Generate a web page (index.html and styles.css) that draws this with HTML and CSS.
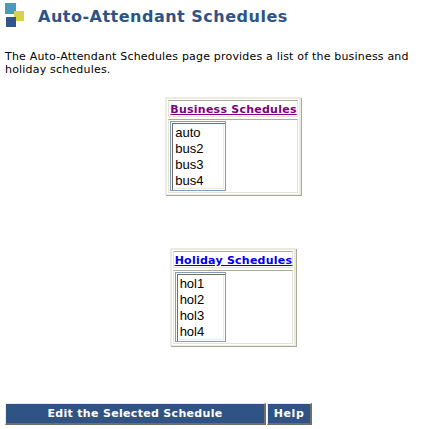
FILE: index.html
```html
<!DOCTYPE html>
<html>
<head>
<meta charset="utf-8">
<title>Auto-Attendant Schedules</title>
<link rel="stylesheet" href="styles.css">
</head>
<body>
<header class="head">
  <svg class="logo" width="20" height="25" viewBox="0 0 20 25">
    <rect x="0" y="0" width="11" height="11" fill="#4a9aba"/>
    <rect x="9" y="8" width="10" height="10" fill="#d8d24a"/>
    <rect x="1" y="14" width="10" height="10" fill="#34558b"/>
  </svg>
  <h1 class="title">Auto-Attendant Schedules</h1>
</header>
<p class="intro">The Auto-Attendant Schedules page provides a list of the business and holiday schedules.</p>
<main class="panels">
  <section class="panel">
    <h2 class="panel-head"><a class="link visited" href="#">Business Schedules</a></h2>
    <div class="panel-body">
      <ul class="listbox"><li>auto</li><li>bus2</li><li>bus3</li><li>bus4</li></ul>
    </div>
  </section>
  <section class="panel">
    <h2 class="panel-head"><a class="link" href="#">Holiday Schedules</a></h2>
    <div class="panel-body">
      <ul class="listbox listbox-narrow"><li>hol1</li><li>hol2</li><li>hol3</li><li>hol4</li></ul>
    </div>
  </section>
</main>
<footer class="actions">
  <button class="btn btn-main" type="button">Edit the Selected Schedule</button>
  <button class="btn btn-help" type="button">Help</button>
</footer>
</body>
</html>
```
FILE: styles.css
```css
html, body { margin: 0; padding: 0; background: #fff; }
body { width: 447px; height: 429px; overflow: hidden; font-family: "DejaVu Sans", Verdana, sans-serif; color: #000; }
.head { display: flex; align-items: flex-start; padding: 3px 0 0 5px; height: 31px; }
.logo { flex: none; display: block; }
.title { margin: 2px 0 0 13px; font-size: 16px; line-height: 24px; font-weight: bold; color: #2f5385; letter-spacing: 0.5px; white-space: nowrap; }
.intro { margin: 16px 0 0 5px; width: 425px; font-size: 11px; line-height: 13px; letter-spacing: 0.19px; }
.panels { display: flex; flex-direction: column; align-items: center; gap: 53px; margin: 21px 0 0 19px; }
.panel { box-sizing: border-box; height: 98px; padding: 1px; background: #fff; border: 2px solid #ecebe0; border-bottom-width: 1px; box-shadow: 1px 1px 0 #acaa9c; }
.panel-head { box-sizing: border-box; height: 17px; margin: 0; padding: 0 0 0 1px; border: 1px solid #e4e3da; border-top-color: #acaa9c; font-size: 11px; line-height: 17px; font-weight: bold; letter-spacing: 0.25px; white-space: nowrap; }
.link { color: #0000ee; text-decoration: underline; }
.link.visited { color: #800080; }
.panel-body { box-sizing: border-box; height: 74px; margin-top: 2px; padding: 1px; border: 1px solid #e4e3da; border-top-color: #acaa9c; }
.listbox { box-sizing: border-box; list-style: none; margin: 0; padding: 3px 0 0 4px; width: 56px; height: 70px; border: 1px solid #7f9db9; box-shadow: inset 1px 1px 0 #fff, inset 2px 2px 0 #716f64, inset -1px -1px 0 #fff, inset -2px -2px 0 #ecebe0; font-family: "Liberation Sans", Arial, sans-serif; font-size: 13px; line-height: 16px; }
.listbox-narrow { width: 51px; }
.actions { position: absolute; left: 5px; top: 403px; display: flex; gap: 1px; }
.btn { box-sizing: border-box; height: 22px; padding: 0; background: #2f5385; color: #fff; font-family: "DejaVu Sans", Verdana, sans-serif; font-size: 11px; font-weight: bold; letter-spacing: 0.32px; border-style: solid; border-color: #ecebe0 #716f64 #716f64 #ecebe0; border-width: 1px 2px 2px 1px; }
.btn-main { width: 261px; }
.btn-help { width: 45px; letter-spacing: 0.6px; }
```
